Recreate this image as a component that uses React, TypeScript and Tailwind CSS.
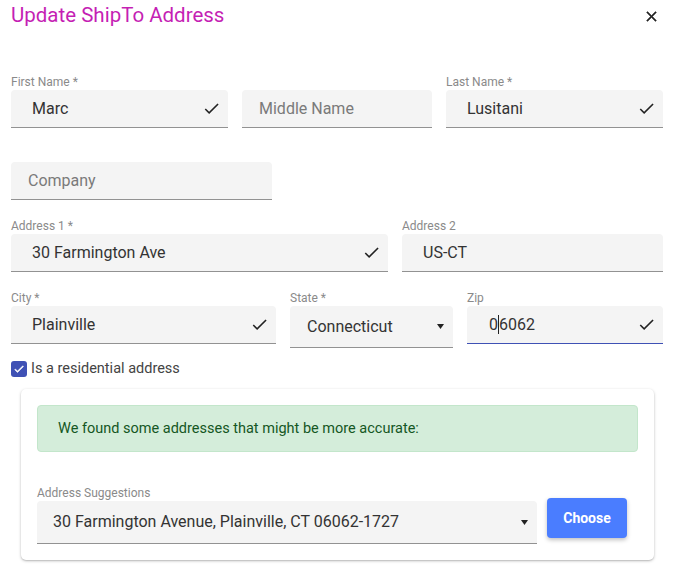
import React from "react";

const CheckIcon = () => (
  <svg width="19" height="19" viewBox="0 0 24 24" className="shrink-0">
    <path d="M9 16.17L4.83 12l-1.42 1.41L9 19 21 7l-1.41-1.41z" fill="#222" />
  </svg>
);

const Arrow = () => (
  <svg width="7" height="5" viewBox="0 0 7 5" className="shrink-0">
    <path d="M0 0h7L3.5 5z" fill="#222" />
  </svg>
);

type FieldProps = {
  label?: string;
  value?: string;
  placeholder?: string;
  width: string;
  check?: boolean;
};

const Field = ({ label, value, placeholder, width, check }: FieldProps) => (
  <div className={`flex flex-col ${width}`}>
    <div className="h-[15px] text-[12px] leading-[15px] text-[#8a8a8a]">{label ?? ""}</div>
    <div
      className={`flex h-[38px] items-center justify-between rounded-t-[4px] border-b border-[#929292] bg-[#f4f4f4] pr-[7px] ${
        value ? "pl-[21px]" : "pl-[17px]"
      }`}
    >
      {value ? (
        <span className="text-[16px] text-[#333]">{value}</span>
      ) : (
        <span className="text-[16px] text-[#7a7a7a]">{placeholder}</span>
      )}
      {check && <CheckIcon />}
    </div>
  </div>
);

export default function App() {
  return (
    <div
      className="relative h-[568px] w-[675px] overflow-hidden bg-white px-[11px]"
      style={{ fontFamily: "Roboto, 'Liberation Sans', sans-serif" }}
    >
      <div className="flex h-[28px] items-start justify-between pt-[3px]">
        <div className="text-[20.5px] leading-[24px] text-[#c51fb4]">Update ShipTo Address</div>
        <svg width="17" height="17" viewBox="0 0 24 24" className="mr-[4px] mt-[5px]">
          <path
            d="M19 6.41L17.59 5 12 10.59 6.41 5 5 6.41 10.59 12 5 17.59 6.41 19 12 13.41 17.59 19 19 17.59 13.41 12z"
            fill="#222"
            stroke="#222"
            strokeWidth="0.6"
          />
        </svg>
      </div>

      <div className="mt-[47px] flex gap-[14px]">
        <Field label="First Name *" value="Marc" width="w-[217px]" check />
        <Field placeholder="Middle Name" width="w-[190px]" />
        <Field label="Last Name *" value="Lusitani" width="w-[217px]" check />
      </div>

      <div className="mt-[19px] flex gap-[14px]">
        <Field placeholder="Company" width="w-[261px]" />
      </div>

      <div className="mt-[19px] flex gap-[14px]">
        <Field label="Address 1 *" value="30 Farmington Ave" width="w-[377px]" check />
        <Field label="Address 2" value="US-CT" width="w-[261px]" />
      </div>

      <div className="mt-[19px] flex items-start gap-[14px]">
        <Field label="City *" value="Plainville" width="w-[265px]" check />
        <div className="flex w-[163px] flex-col">
          <div className="h-[15px] text-[12px] leading-[15px] text-[#8a8a8a]">State *</div>
          <div className="flex h-[42px] items-center justify-between rounded-t-[4px] border-b border-[#929292] bg-[#f4f4f4] pl-[17px] pr-[9px]">
            <span className="text-[16px] text-[#333]">Connecticut</span>
            <Arrow />
          </div>
        </div>
        <div className="flex w-[196px] flex-col">
          <div className="h-[15px] text-[12px] leading-[15px] text-[#8a8a8a]">Zip</div>
          <div className="flex h-[38px] items-center justify-between rounded-t-[4px] border-b border-[#3f51b5] bg-[#f4f4f4] pl-[22px] pr-[7px]">
            <span className="flex items-center text-[16px] text-[#333]">
              0<span className="inline-block h-[19px] w-px bg-[#222]" />6062
            </span>
            <CheckIcon />
          </div>
        </div>
      </div>

      <div className="mt-[13px] flex h-[16px] items-center gap-[4px]">
        <div className="flex h-[16px] w-[16px] items-center justify-center rounded-[3px] bg-[#3f51b5]">
          <svg width="12" height="12" viewBox="0 0 24 24">
            <path d="M9 16.17L4.83 12l-1.42 1.41L9 19 21 7l-1.41-1.41z" fill="#fff" stroke="#fff" strokeWidth="1" />
          </svg>
        </div>
        <span className="text-[14.5px] leading-[16px] text-[#444]">Is a residential address</span>
      </div>

      <div className="mx-[10px] mt-[12px] rounded-[5px] bg-white p-[16px] shadow-[0_1px_3px_rgba(0,0,0,0.25),0_1px_1px_rgba(0,0,0,0.08)]">
        <div className="flex h-[47px] items-center rounded-[4px] border border-[#c3e6cb] bg-[#d4edda] pl-[20px] text-[14.5px] text-[#155724]">
          We found some addresses that might be more accurate:
        </div>
        <div className="mt-[34px] flex items-start gap-[10px]">
          <div className="flex w-[500px] flex-col">
            <div className="h-[15px] text-[12px] leading-[15px] text-[#8a8a8a]">Address Suggestions</div>
            <div className="flex h-[43px] items-center justify-between rounded-t-[4px] border-b border-[#929292] bg-[#f4f4f4] pl-[16px] pr-[9px]">
              <span className="text-[16px] text-[#333]">30 Farmington Avenue, Plainville, CT 06062-1727</span>
              <Arrow />
            </div>
          </div>
          <button className="mt-[12px] flex h-[40px] w-[80px] items-center justify-center rounded-[4px] bg-[#4a7dff] text-[14px] font-bold text-white shadow-[0_2px_4px_rgba(0,0,0,0.25)]">
            Choose
          </button>
        </div>
      </div>
    </div>
  );
}
